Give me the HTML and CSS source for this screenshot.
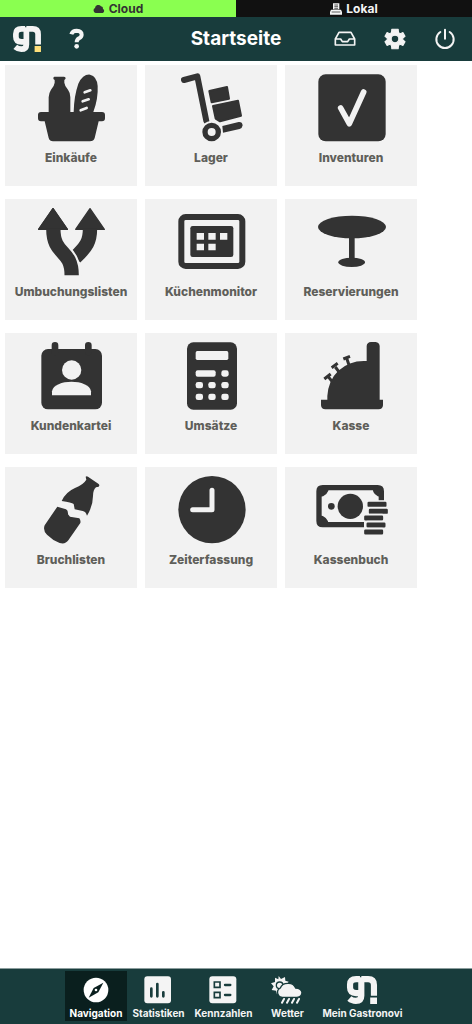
FILE: index.html
```html
<!DOCTYPE html>
<html lang="de">
<head>
<meta charset="utf-8">
<meta name="viewport" content="width=device-width, initial-scale=1">
<title>Startseite</title>
<link rel="stylesheet" href="styles.css">
</head>
<body>
<svg class="defs" aria-hidden="true">
  <symbol id="logo" viewBox="0 0 88 82">
    <path d="M38 9H27Q9 9 9 25V34Q9 50 27 50H38M42 4V58Q42 73 26 73Q15 73 7 66M42 9H62Q79 9 79 26V58" fill="none" stroke="currentColor" stroke-width="18"/>
    <path class="logo-dot" d="M68 63H88V82H68z"/>
  </symbol>
</svg>

<nav class="modes" aria-label="Modus">
  <a class="mode mode-cloud" href="#cloud">
    <svg class="mode-icon" viewBox="0 0 36 30" aria-hidden="true"><path d="M8 27a8 8 0 0 1-2-15A10 10 0 0 1 24 7a7 7 0 0 1 6 8 6.500 6.500 0 0 1-1 12z" fill="currentColor"/></svg>
    Cloud
  </a>
  <a class="mode mode-local" href="#lokal">
    <svg class="mode-icon" viewBox="0 0 36 36" aria-hidden="true"><path d="M9 1H28V19H9zM3 20H33L36 27V35H0V27z" fill="currentColor"/><path d="M13 6H24M13 11H24M13 16H24M5 27H31" stroke="#111" stroke-width="2"/></svg>
    Lokal
  </a>
</nav>

<header class="topbar">
  <div class="tools">
    <a class="tool" href="#start" aria-label="gastronovi"><svg class="logo" aria-hidden="true"><use href="#logo"/></svg></a>
    <button class="tool" type="button" aria-label="Hilfe"><svg class="tool-icon" viewBox="195 82 72 72" aria-hidden="true"><path d="M214 104Q217 93 230 93Q245 94 245 105Q245 111 237 116Q230 120 230 128" fill="none" stroke="currentColor" stroke-width="12"/><circle cx="230" cy="140" r="7" fill="currentColor"/></svg></button>
  </div>
  <h1 class="title">Startseite</h1>
  <div class="tools tools-end">
    <button class="tool" type="button" aria-label="Posteingang"><svg class="tool-icon" viewBox="292 82 72 72" aria-hidden="true"><path d="M299 118L310 98H346L357 118V136H299zM299 118H315L320 126H336L341 118H357" fill="none" stroke="currentColor" stroke-width="5" stroke-linejoin="round"/></svg></button>
    <button class="tool" type="button" aria-label="Einstellungen"><svg class="tool-icon" viewBox="1 1 22 22" aria-hidden="true"><path fill="currentColor" stroke="currentColor" stroke-width="1" stroke-linejoin="round" d="M19.140 12.940a7.500 7.500 0 0 0 0-1.880l2.030-1.580-1.920-3.320-2.390.96a7 7 0 0 0-1.620-.94L14.880 3H9.120l-.36 3.180a7 7 0 0 0-1.620.94l-2.390-.96-1.920 3.320 2.030 1.580a7.500 7.500 0 0 0 0 1.880l-2.030 1.580 1.920 3.320 2.390-.96a7 7 0 0 0 1.620.94L9.120 21h5.760l.36-3.180a7 7 0 0 0 1.620-.94l2.390.96 1.920-3.320zM12 15.500a3.500 3.500 0 1 1 0-7 3.500 3.500 0 0 1 0 7z"/></svg></button>
    <button class="tool" type="button" aria-label="Abmelden"><svg class="tool-icon" viewBox="591 82 72 72" aria-hidden="true"><path d="M613 97A26 26 0 1 0 641 97M627 90V117" fill="none" stroke="currentColor" stroke-width="6" stroke-linecap="round"/></svg></button>
  </div>
</header>

<main class="tiles">
  <a class="tile" href="#einkaeufe">
    <svg class="tile-icon" viewBox="111 36 204 204" aria-hidden="true">
      <path fill="currentColor" d="M163 44H192Q197 44 197 49Q196 53 193 54V62Q194 72 204 83Q211 92 211 106V150H221Q222 102 235 65Q249 36 270 38Q291 43 293 72Q295 110 280 150H306Q315 150 315 159V169Q315 178 306 178H296L284 228Q281 238 270 238H159Q149 238 146 228L134 178H123Q114 178 114 169V159Q114 150 123 150H146V106Q147 92 153 83Q163 72 164 62V54Q160 53 160 49Q160 45 163 44z"/>
      <path d="M254 91L271 85M248 118L266 112M242 145L260 138" fill="none" stroke="#f2f2f2" stroke-width="8" stroke-linecap="round"/>
    </svg>
    <span>Einkäufe</span>
  </a>
  <a class="tile" href="#lager">
    <svg class="tile-icon" viewBox="111 36 204 204" aria-hidden="true">
      <path d="M132 54L172 43L199 177" fill="none" stroke="currentColor" stroke-width="18" stroke-linecap="round" stroke-linejoin="round"/>
      <circle cx="215" cy="210" r="33" fill="#f2f2f2"/>
      <circle cx="215" cy="210" r="20" fill="none" stroke="currentColor" stroke-width="16"/>
      <path fill="currentColor" stroke="currentColor" stroke-width="6" stroke-linejoin="round" d="M208 87L261 75L267 110L215 121zM219 132L294 116L303 161L240 178L227 170z"/>
      <path fill="currentColor" d="M247 192L296 180Q307 179 308 190Q307 198 299 201L249 212z"/>
    </svg>
    <span>Lager</span>
  </a>
  <a class="tile" href="#inventuren">
    <svg class="tile-icon" viewBox="111 36 204 204" aria-hidden="true">
      <rect x="115" y="37" width="202" height="201" rx="22" fill="currentColor"/>
      <path d="M182 138L208 185L251 90" fill="none" stroke="#f2f2f2" stroke-width="17" stroke-linecap="round" stroke-linejoin="round"/>
    </svg>
    <span>Inventuren</span>
  </a>
  <a class="tile" href="#umbuchungslisten">
    <svg class="tile-icon" viewBox="111 36 204 204" aria-hidden="true">
      <path fill="currentColor" stroke="currentColor" stroke-width="4" stroke-linejoin="round" d="M159 38L202 100H116zM270 38L313 100H227z"/>
      <path d="M270 98C270 135 260 152 226 184" fill="none" stroke="currentColor" stroke-width="43"/>
      <path d="M160 98C160 180 216 158 216 240" fill="none" stroke="#f2f2f2" stroke-width="55"/>
      <path fill="currentColor" stroke="currentColor" stroke-width="4" stroke-linejoin="round" d="M159 38L202 100H116z"/>
      <path d="M160 98C160 180 215 158 215 238" fill="none" stroke="currentColor" stroke-width="43"/>
    </svg>
    <span>Umbuchungslisten</span>
  </a>
  <a class="tile" href="#kuechenmonitor">
    <svg class="tile-icon" viewBox="531 36 204 204" aria-hidden="true">
      <rect x="544" y="63" width="183" height="147" rx="13" fill="none" stroke="currentColor" stroke-width="18"/>
      <rect x="571" y="90" width="129" height="93" rx="7" fill="currentColor"/>
      <path d="M590 111H612V131H590zM625 111H647V131H625zM660 111H682V131H660zM590 143H612V163H590zM625 143H647V163H625z" fill="#f2f2f2"/>
    </svg>
    <span>Küchenmonitor</span>
  </a>
  <a class="tile" href="#reservierungen">
    <svg class="tile-icon" viewBox="111 36 204 204" aria-hidden="true">
      <g fill="currentColor"><ellipse cx="216" cy="93" rx="102" ry="34"/><path d="M207 120H224V195H207z"/><ellipse cx="215" cy="199" rx="40" ry="14"/></g>
    </svg>
    <span>Reservierungen</span>
  </a>
  <a class="tile" href="#kundenkartei">
    <svg class="tile-icon" viewBox="111 36 204 204" aria-hidden="true">
      <rect x="124" y="57" width="182" height="181" rx="20" fill="currentColor"/>
      <path d="M165 46V66M265 46V66" stroke="currentColor" stroke-width="20" stroke-linecap="round"/>
      <circle cx="215" cy="120" r="29" fill="#f2f2f2"/>
      <path d="M156 196V184C162 146 267 146 273 184V196z" fill="#f2f2f2"/>
    </svg>
    <span>Kundenkartei</span>
  </a>
  <a class="tile" href="#umsaetze">
    <svg class="tile-icon" viewBox="531 36 204 204" aria-hidden="true">
      <rect x="561" y="37" width="150" height="202" rx="19" fill="currentColor"/>
      <g fill="#f2f2f2"><rect x="587" y="63" width="98" height="27" rx="5"/><rect x="587" y="121" width="60" height="19" rx="6"/><rect x="664" y="121" width="22" height="19" rx="7"/><rect x="587" y="156" width="22" height="19" rx="7"/><rect x="625" y="156" width="22" height="19" rx="7"/><rect x="664" y="156" width="22" height="19" rx="7"/><rect x="587" y="191" width="22" height="19" rx="7"/><rect x="625" y="191" width="22" height="19" rx="7"/><rect x="664" y="191" width="22" height="19" rx="7"/></g>
    </svg>
    <span>Umsätze</span>
  </a>
  <a class="tile" href="#kasse">
    <svg class="tile-icon" viewBox="111 438 204 204" aria-hidden="true">
      <path fill="currentColor" d="M142 611V600Q145 553 175 524Q210 492 260 495V450Q261 439 273 438H287Q298 440 299 450V611H309V628Q308 640 296 640H136Q124 640 123 628V611z"/>
      <path d="M144 541L156 556M166 513L178 529M200 487L207 507" stroke="currentColor" stroke-width="9"/><path d="M133 549L152 534M155 515L173 502M190 489L210 481" stroke="currentColor" stroke-width="9"/>
    </svg>
    <span>Kasse</span>
  </a>
  <a class="tile" href="#bruchlisten">
    <svg class="tile-icon" viewBox="111 36 204 204" aria-hidden="true">
      <path fill="currentColor" d="M257 38Q260 35 264 38L296 60Q300 64 296 68L288 70Q279 78 279 96Q279 126 261 155Q257 142 248 141L224 136L221 120Q215 116 185 111Q197 84 225 72Q250 62 259 47z"/>
      <path fill="currentColor" d="M172 128L198 136Q205 139 204 151L210 158L238 163Q243 170 241 177L205 229Q196 242 179 237Q157 228 141 212Q128 199 134 184z"/>
    </svg>
    <span>Bruchlisten</span>
  </a>
  <a class="tile" href="#zeiterfassung">
    <svg class="tile-icon" viewBox="531 36 204 204" aria-hidden="true">
      <circle cx="636" cy="137" r="101" fill="currentColor"/>
      <path d="M636 79V137H578" fill="none" stroke="#f2f2f2" stroke-width="15" stroke-linecap="round" stroke-linejoin="round"/>
    </svg>
    <span>Zeiterfassung</span>
  </a>
  <a class="tile" href="#kassenbuch">
    <svg class="tile-icon" viewBox="111 36 204 204" aria-hidden="true">
      <path d="M304 110V82Q304 71 293 71H128Q117 71 117 82V171Q117 182 128 182H252" fill="none" stroke="currentColor" stroke-width="16"/>
      <path fill="currentColor" d="M117 71H147Q145 96 117 99zM304 71H277Q280 97 304 99zM117 182V154Q143 156 146 182z"/>
      <circle cx="211" cy="127" r="38" fill="currentColor"/><circle cx="154" cy="127" r="10" fill="currentColor"/>
      <g fill="currentColor" stroke="#f2f2f2" stroke-width="5"><rect x="260" y="111" width="62" height="20" rx="6"/><rect x="264" y="132" width="62" height="20" rx="6"/><rect x="250" y="152" width="62" height="20" rx="6"/><rect x="257" y="173" width="62" height="20" rx="6"/><rect x="250" y="194" width="62" height="20" rx="6"/></g>
    </svg>
    <span>Kassenbuch</span>
  </a>
</main>

<nav class="bottombar" aria-label="Bereiche">
  <a class="section section-active" href="#navigation" aria-current="page">
    <svg class="section-icon" viewBox="69 42 84 84" aria-hidden="true"><circle cx="111" cy="84" r="37" fill="currentColor"/><path fill="#0a1f1e" d="M133 62L118 91L89 107L104 78z"/><circle cx="111" cy="84" r="4" fill="currentColor"/></svg>
    <span>Navigation</span>
  </a>
  <a class="section" href="#statistiken">
    <svg class="section-icon" viewBox="255 42 84 84" aria-hidden="true"><rect x="256" y="43" width="80" height="81" rx="9" fill="currentColor"/><path d="M277 80V103M295 66V103M313 91V103" stroke="#183c3c" stroke-width="8" stroke-linecap="round"/></svg>
    <span>Statistiken</span>
  </a>
  <a class="section" href="#kennzahlen">
    <svg class="section-icon" viewBox="449 42 84 84" aria-hidden="true"><rect x="450" y="43" width="81" height="81" rx="9" fill="currentColor"/><path d="M465 60H482V76H465zM465 91H482V107H465z" fill="none" stroke="#183c3c" stroke-width="5"/><path d="M497 69H513M497 99H513" stroke="#183c3c" stroke-width="7" stroke-linecap="round"/></svg>
    <span>Kennzahlen</span>
  </a>
  <a class="section" href="#wetter">
    <svg class="section-icon section-icon-wide" viewBox="124 42 96 84" aria-hidden="true">
      <path fill="currentColor" d="M147 42L154 51L166 45L167 56L177 59L170 69L174 80L163 84L150 88L142 97L139 86L126 84L132 73L124 64L136 60L136 47L146 52z"/>
      <circle cx="150" cy="70" r="10" fill="none" stroke="#183c3c" stroke-width="4"/>
      <path fill="currentColor" stroke="#183c3c" stroke-width="4" d="M162 106A15 15 0 0 1 152 78Q157 63 177 64Q192 64 198 78Q216 79 217 92Q216 106 202 106z"/>
      <path d="M163 111L157 122M178 111L172 122M193 111L187 122M208 111L202 122" stroke="currentColor" stroke-width="6" stroke-linecap="round"/>
    </svg>
    <span>Wetter</span>
  </a>
  <a class="section" href="#gastronovi">
    <svg class="section-icon section-icon-wide" aria-hidden="true"><use href="#logo"/></svg>
    <span>Mein Gastronovi</span>
  </a>
</nav>
</body>
</html>
```
FILE: styles.css
```css
* {
  box-sizing: border-box;
}

body {
  margin: 0;
  min-height: 100vh;
  display: flex;
  flex-direction: column;
  background: #fff;
  font-family: Inter, "Liberation Sans", sans-serif;
  font-weight: 700;
}

a {
  color: inherit;
  text-decoration: none;
}

svg {
  display: block;
  flex: none;
}

.defs {
  position: absolute;
  width: 0;
  height: 0;
}

.modes {
  display: grid;
  grid-template-columns: 1fr 1fr;
  font-size: 12px;
  line-height: 17px;
}

.mode {
  display: flex;
  align-items: center;
  justify-content: center;
  gap: 4px;
}

.mode-cloud {
  background: #8aff50;
  color: #333;
}

.mode-local {
  background: #111;
  color: #f4f4f4;
}

.mode-icon {
  width: 12px;
  height: 12px;
}

.topbar {
  display: grid;
  grid-template-columns: 1fr auto 1fr;
  align-items: center;
  height: 44px;
  padding: 0 2px;
  background: #183c3c;
  color: #f4f4f4;
}

.tools {
  display: flex;
}

.tools-end {
  justify-content: flex-end;
}

.tool {
  display: flex;
  align-items: center;
  justify-content: center;
  width: 50px;
  height: 44px;
  padding: 0;
  border: 0;
  background: none;
  color: inherit;
}

.tool-icon {
  width: 24px;
  height: 24px;
}

.logo {
  --dot: #ffe07a;
  width: 28px;
  height: 26px;
}

.logo-dot {
  fill: var(--dot, currentColor);
}

.title {
  margin: 0;
  color: #fff;
  font-size: 19px;
  line-height: 24px;
}

.tiles {
  flex: 1;
  display: grid;
  grid-template-columns: repeat(auto-fill, 132px);
  align-content: start;
  gap: 13px 8px;
  padding: 4px 5px;
}

.tile {
  display: flex;
  flex-direction: column;
  align-items: center;
  gap: 6px;
  height: 121px;
  padding-top: 9px;
  background: #f2f2f2;
  color: #5f5f5a;
  font-size: 12px;
  font-weight: 800;
  line-height: 20px;
}

.tile-icon {
  width: 68px;
  height: 68px;
  overflow: visible;
  color: #333;
}

.bottombar {
  display: flex;
  justify-content: center;
  height: 56px;
  padding: 2px 0 3px;
  border-top: 1px solid #8b9d9d;
  background: #183c3c;
  color: #f4f4f4;
  font-size: 10px;
  line-height: 16px;
}

.section {
  display: flex;
  flex-direction: column;
  align-items: center;
  gap: 1px;
  min-width: 60px;
  padding: 5px 5px 0;
}

.section-active {
  background: #0a1f1e;
  color: #fff;
}

.section-icon {
  width: 28px;
  height: 28px;
}

.section-icon-wide {
  width: 32px;
}
```
